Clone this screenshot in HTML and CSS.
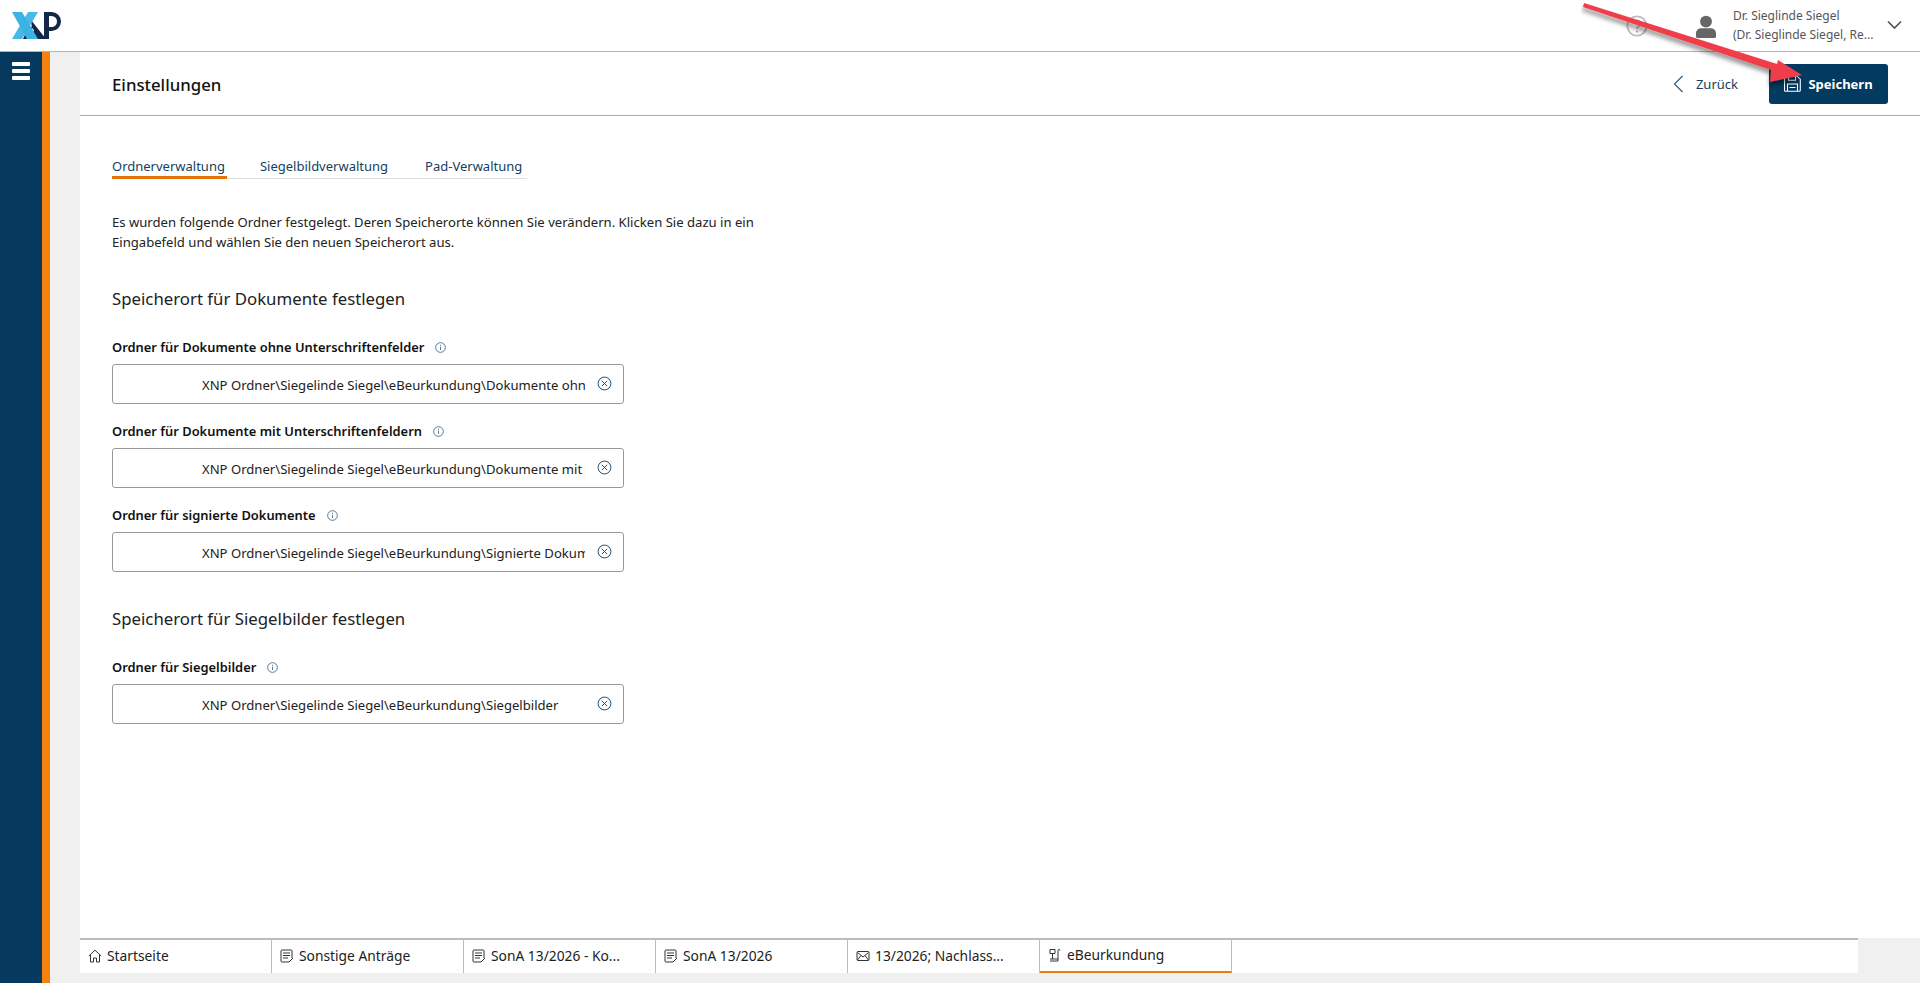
FILE: index.html
```html
<!DOCTYPE html>
<html lang="de">
<head>
<meta charset="utf-8">
<title>Einstellungen</title>
<link rel="stylesheet" href="styles.css">
</head>
<body>
<div class="app">
  <header class="topbar">
    <svg class="logo" width="62" height="32" viewBox="0 0 62 32">
      <path fill="#12284a" d="M44 2h5v27h-5zM49 2h2.500a9 9 0 0 1 0 19H49v-4h2.500a5 5 0 0 0 0-11H49z"/>
      <path fill="#12284a" d="M31 10l15 19H33zM29 15l-6 14h7l4-9z"/>
      <path fill="#3bb3e4" d="M12 2h10l16 27H27z"/>
      <path fill="#3bb3e4" opacity=".92" d="M28 2h10L22 29H12z"/>
    </svg>
    <div class="topbar-right">
      <svg class="help" width="22" height="22" viewBox="0 0 24 24"><circle cx="12" cy="12" r="10.500" fill="none" stroke="#bdbdbd" stroke-width="2"/><path d="M8.500 9.500a3.500 3.500 0 1 1 5 3.200c-1 .5-1.500 1-1.500 2.300" fill="none" stroke="#bdbdbd" stroke-width="2"/><circle cx="12" cy="18" r="1.300" fill="#bdbdbd"/></svg>
      <svg class="avatar" width="20" height="24" viewBox="0 0 22 26"><circle cx="11" cy="7" r="6.500" fill="#666"/><path fill="#666" d="M1.500 25c-1 0-1.500-.5-1.500-1.500V20c0-3.500 3-5.500 6-5.500h10c3 0 6 2 6 5.500v3.500c0 1-.5 1.500-1.500 1.500z"/></svg>
      <div class="user">
        <div>Dr. Sieglinde Siegel</div>
        <div>(Dr. Sieglinde Siegel, Re...</div>
      </div>
      <svg class="chev" width="15" height="10" viewBox="0 0 15 10"><path d="M1 1.500l6.500 6.500L14 1.500" fill="none" stroke="#555" stroke-width="1.700"/></svg>
    </div>
  </header>
  <div class="main">
    <nav class="sidebar">
      <div class="burger"><span></span><span></span><span></span></div>
    </nav>
    <div class="gutter"></div>
    <div class="workspace">
      <div class="toolbar">
        <h1 class="title">Einstellungen</h1>
        <div class="actions">
          <a class="back">
            <svg width="11" height="18" viewBox="0 0 11 18"><path d="M9.500 1L1.500 9l8 8" fill="none" stroke="#2f5f86" stroke-width="1.200"/></svg>
            Zurück
          </a>
          <button class="save">
            <svg width="17" height="17" viewBox="0 0 17 17" fill="none" stroke="#fff" stroke-width="1.100"><path d="M1.500.700h11l3.800 3.500v11a1 1 0 0 1-1 1H1.500a1 1 0 0 1-1-1V1.700a1 1 0 0 1 1-1z"/><path d="M4.500.700v4.500h7V.700"/><path d="M3.500 16V9h10v7M5.500 12.500h6"/></svg>
            Speichern
          </button>
        </div>
      </div>
      <div class="content">
        <div class="tabs">
          <a class="tab tab-active">Ordnerverwaltung</a>
          <a class="tab">Siegelbildverwaltung</a>
          <a class="tab">Pad-Verwaltung</a>
        </div>
        <p class="intro">Es wurden folgende Ordner festgelegt. Deren Speicherorte können Sie verändern. Klicken Sie dazu in ein Eingabefeld und wählen Sie den neuen Speicherort aus.</p>
        <h2 class="section">Speicherort für Dokumente festlegen</h2>
        <div class="field">
          <label class="label">Ordner für Dokumente ohne Unterschriftenfelder <svg class="info" viewBox="0 0 10 10"><circle cx="5" cy="5" r="4.400"/><path d="M5 4.300v3M5 2.500v1"/></svg></label>
          <div class="input"><span class="value">XNP Ordner\Siegelinde Siegel\eBeurkundung\Dokumente ohne Unterschriftenfelder</span><svg class="clear" viewBox="0 0 14 14"><circle cx="7" cy="7" r="6"/><path d="M4.500 4.500l5 5M9.500 4.500l-5 5"/></svg></div>
        </div>
        <div class="field">
          <label class="label">Ordner für Dokumente mit Unterschriftenfeldern <svg class="info" viewBox="0 0 10 10"><circle cx="5" cy="5" r="4.400"/><path d="M5 4.300v3M5 2.500v1"/></svg></label>
          <div class="input"><span class="value">XNP Ordner\Siegelinde Siegel\eBeurkundung\Dokumente mit Unterschriftenfeldern</span><svg class="clear" viewBox="0 0 14 14"><circle cx="7" cy="7" r="6"/><path d="M4.500 4.500l5 5M9.500 4.500l-5 5"/></svg></div>
        </div>
        <div class="field">
          <label class="label">Ordner für signierte Dokumente <svg class="info" viewBox="0 0 10 10"><circle cx="5" cy="5" r="4.400"/><path d="M5 4.300v3M5 2.500v1"/></svg></label>
          <div class="input"><span class="value">XNP Ordner\Siegelinde Siegel\eBeurkundung\Signierte Dokumente</span><svg class="clear" viewBox="0 0 14 14"><circle cx="7" cy="7" r="6"/><path d="M4.500 4.500l5 5M9.500 4.500l-5 5"/></svg></div>
        </div>
        <h2 class="section section-2">Speicherort für Siegelbilder festlegen</h2>
        <div class="field">
          <label class="label">Ordner für Siegelbilder <svg class="info" viewBox="0 0 10 10"><circle cx="5" cy="5" r="4.400"/><path d="M5 4.300v3M5 2.500v1"/></svg></label>
          <div class="input"><span class="value">XNP Ordner\Siegelinde Siegel\eBeurkundung\Siegelbilder</span><svg class="clear" viewBox="0 0 14 14"><circle cx="7" cy="7" r="6"/><path d="M4.500 4.500l5 5M9.500 4.500l-5 5"/></svg></div>
        </div>
      </div>
      <div class="dock">
        <div class="dock-tabs">
          <div class="dtab"><svg class="dicon" viewBox="0 0 14 14"><path d="M.8 7L7 1.200 13.200 7M2.500 6v7h3V9h3v4h3V6"/></svg>Startseite</div>
          <div class="dtab"><svg class="dicon" viewBox="0 0 14 14"><path d="M12 9V2a1 1 0 0 0-1-1H2a1 1 0 0 0-1 1v10a1 1 0 0 0 1 1h7M3 4h7M3 6.500h7M3 9h5M9 13l4-4"/></svg>Sonstige Anträge</div>
          <div class="dtab"><svg class="dicon" viewBox="0 0 14 14"><path d="M12 9V2a1 1 0 0 0-1-1H2a1 1 0 0 0-1 1v10a1 1 0 0 0 1 1h7M3 4h7M3 6.500h7M3 9h5M9 13l4-4"/></svg>SonA 13/2026 - Ko...</div>
          <div class="dtab"><svg class="dicon" viewBox="0 0 14 14"><path d="M12 9V2a1 1 0 0 0-1-1H2a1 1 0 0 0-1 1v10a1 1 0 0 0 1 1h7M3 4h7M3 6.500h7M3 9h5M9 13l4-4"/></svg>SonA 13/2026</div>
          <div class="dtab"><svg class="dicon" viewBox="0 0 14 14"><path d="M2 2.500h10a1 1 0 0 1 1 1v7a1 1 0 0 1-1 1H2a1 1 0 0 1-1-1v-7a1 1 0 0 1 1-1zM1.500 3.500L7 8l5.500-4.500M1.500 11l3.500-4.500M12.500 11L9 6.500"/></svg>13/2026; Nachlass...</div>
          <div class="dtab dtab-active"><svg class="dicon" viewBox="0 0 14 14"><path d="M2 1.500h5v4H2zM4.500 5.500V11M2 11h8M2 13h8M10 13V2.500a1 1 0 0 1 2 0"/></svg>eBeurkundung</div>
        </div>
      </div>
    </div>
  </div>
  <svg class="arrow" width="240" height="100" viewBox="0 0 240 100">
    <defs><filter id="sh" x="-10%" y="-20%" width="120%" height="150%"><feDropShadow dx="-1" dy="4" stdDeviation="2" flood-color="#000" flood-opacity=".4"/></filter></defs>
    <path filter="url(#sh)" fill="#ef3d4a" d="M3 1L2 5 190 68l-1 12 32-7-24-15-1 4z"/>
  </svg>
</div>
</body>
</html>
```

FILE: styles.css
```css
* { box-sizing: border-box; }
html, body { margin: 0; height: 100%; }
body { font-family: "Noto Sans", "Open Sans", sans-serif; font-size: 13px; color: #111; background: #fff; overflow: hidden; }
.app { position: relative; display: flex; flex-direction: column; height: 983px; }

.topbar { height: 52px; flex: none; border-bottom: 1px solid #b5b5b5; display: flex; align-items: center; justify-content: space-between; padding-right: 18px; }
.logo { display: block; }
.topbar-right { display: flex; align-items: center; }
.help { margin-right: 48px; }
.avatar { margin-right: 17px; margin-top: 2px; }
.user { width: 154px; font-size: 12px; line-height: 19px; color: #555; white-space: nowrap; margin-top: -2px; }
.chev { margin-top: -2px; }

.main { flex: 1; display: flex; min-height: 0; }
.sidebar { width: 50px; flex: none; background: #053a5e; border-right: 8px solid #f5820d; padding: 10px 0 0 12px; }
.burger { width: 18px; display: flex; flex-direction: column; gap: 3px; }
.burger span { display: block; height: 4px; background: #fff; border-radius: 1px; }
.gutter { width: 30px; flex: none; background: #f0f0f0; }

.workspace { flex: 1; min-width: 0; display: flex; flex-direction: column; }
.toolbar { height: 64px; flex: none; border-bottom: 1px solid #ababab; display: flex; align-items: center; justify-content: space-between; padding: 0 32px; }
.title { margin: 2px 0 0; font-size: 16.800px; font-weight: 500; color: #111; }
.actions { display: flex; align-items: center; gap: 31px; }
.back { display: flex; align-items: center; gap: 12px; font-size: 13px; color: #143d5f; }
.save { width: 119px; height: 40px; border: 0; border-radius: 3px; background: #033a5f; color: #fff; display: flex; align-items: center; justify-content: center; gap: 7px; font: 700 13px "Noto Sans", sans-serif; }

.content { flex: 1; min-height: 0; padding: 41px 0 0 32px; }
.tabs { display: flex; width: 415px; border-bottom: 1px solid #ddd; height: 22px; }
.tab { font-size: 13px; color: #123f62; height: 22px; line-height: 18px; margin-right: 37px; white-space: nowrap; }
.tab-active { color: #123f62; border-bottom: 3px solid #e5710a; padding-right: 2px; margin-right: 33px; }
.intro { margin: 33px 0 0; width: 680px; font-size: 13.100px; line-height: 20px; color: #222; }
.section { margin: 36px 0 0; font-size: 16.800px; line-height: 22px; font-weight: 400; color: #222; }
.section-2 { margin-top: 36px; }
.field { margin-top: 18px; }
.section + .field { margin-top: 28px; }
.label { display: flex; align-items: center; gap: 6px; height: 18px; font-size: 12.900px; font-weight: 600; color: #111; }
.info { width: 11px; height: 11px; margin-left: 5px; fill: none; stroke: #3f6c8e; stroke-width: .8; }
.input { width: 512px; height: 40px; margin-top: 8px; border: 1px solid #999; border-radius: 3px; display: flex; align-items: center; padding: 0 11px 0 89px; }
.value { flex: 1; min-width: 0; overflow: hidden; white-space: nowrap; font-size: 13.100px; color: #222; margin-top: 1px; }
.clear { width: 15px; height: 15px; margin-left: 12px; margin-top: -1px; flex: none; fill: none; stroke: #1c4a6e; stroke-width: .9; }

.dock { height: 45px; flex: none; background: #f0f0f0; }
.dock-tabs { width: 1778px; height: 35px; background: #fff; border-top: 2px solid #bcbcbc; display: flex; }
.dtab { width: 192px; height: 33px; border-right: 1px solid #bcbcbc; display: flex; align-items: center; padding: 0 0 2px 8px; gap: 5px; font-size: 13.800px; color: #222; white-space: nowrap; }
.dtab-active { border-bottom: 2px solid #ee7d11; }
.dicon { width: 14px; height: 14px; flex: none; fill: none; stroke: #333; stroke-width: 1; }

.arrow { position: absolute; left: 1581px; top: 2px; pointer-events: none; }
```
